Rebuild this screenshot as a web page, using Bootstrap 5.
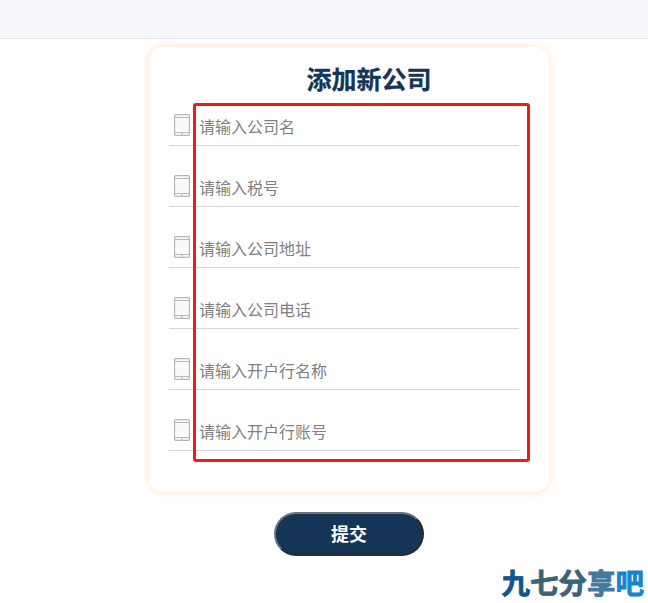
<!DOCTYPE html>
<html lang="zh-CN">
<head>
    <meta charset="UTF-8">
    <meta name="viewport" content="width=device-width, initial-scale=1.0">
    <title>添加新公司</title>
    <link href="https://cdn.jsdelivr.net/npm/bootstrap@5.3.3/dist/css/bootstrap.min.css" rel="stylesheet">
    <style>
        body {
            font-family: "Liberation Sans", "Noto Sans CJK SC", sans-serif;
            height: 603px;
            overflow: hidden;
        }
        .top-strip {
            height: 39px;
            background-color: #f5f7fb;
            border-bottom: 1px solid #e3e6ec;
        }
        .form-box {
            width: 400px;
            height: 445px;
            margin: 8px 0 0 149px;
            padding: 16px 30px 0 20px;
            border-radius: 14px;
            box-shadow: 0 0 6px 2px #ffecd6;
        }
        .form-title {
            font-size: 25px;
            font-weight: 700;
            line-height: 34px;
            color: #153557;
            margin-left: 50px;
            text-align: center;
            -webkit-text-stroke: .3px #153557;
        }
        .field-row {
            height: 61px;
            padding: 0 0 5px 5px;
            border-bottom: 1px solid #d5d5d5;
        }
        .field-row:first-of-type {
            height: 49px;
        }
        .field-row svg {
            flex: none;
            margin-bottom: 4px;
        }
        .field-input {
            border: 0;
            outline: 0;
            padding: 0;
            margin-left: 9px;
            width: 300px;
            font-size: 16px;
            line-height: 24px;
            color: #333;
            background: transparent;
        }
        .field-input::placeholder {
            color: #808080;
            opacity: 1;
        }
        .red-mark {
            position: absolute;
            left: 193px;
            top: 103px;
            width: 337px;
            height: 359px;
            border: 3px solid #f01c14;
            border-radius: 3px;
            pointer-events: none;
        }
        .submit-btn {
            display: block;
            width: 150px;
            height: 44px;
            margin: 20px 0 0 274px;
            border-radius: 22px;
            border: 2px solid;
            border-color: #6f7278 #2b2b2b #2b2b2b #6f7278;
            background-color: #153557;
            color: #fff;
            font-size: 18px;
            font-weight: 700;
            padding: 2px 0 0;
        }
        .site-mark {
            position: absolute;
            right: 4px;
            bottom: 3px;
            font-size: 28.5px;
            font-weight: 700;
            line-height: 32px;
            white-space: nowrap;
            -webkit-text-stroke: .8px;
        }
        .site-a { color: #12568c; }
        .site-b { color: #3a6478; }
        .site-c { color: #44789c; }
        .site-d { color: #1585cc; }
    </style>
</head>
<body>
    <div class="top-strip"></div>

    <div class="form-box bg-white">
        <div class="form-title">添加新公司</div>
        <form onsubmit="return false">
            <div class="field-row d-flex align-items-end">
                <svg width="16" height="22" viewBox="0 0 16 22" fill="#fafafa" stroke="#b8b8b8" stroke-width="1.2"><rect x=".6" y=".6" width="14.8" height="20.8" rx="1"/><path d="M1 3.5h14M1 18.5h14M8 18.5v3"/></svg>
                <input class="field-input" type="text" placeholder="请输入公司名">
            </div>
            <div class="field-row d-flex align-items-end">
                <svg width="16" height="22" viewBox="0 0 16 22" fill="#fafafa" stroke="#b8b8b8" stroke-width="1.2"><rect x=".6" y=".6" width="14.8" height="20.8" rx="1"/><path d="M1 3.5h14M1 18.5h14M8 18.5v3"/></svg>
                <input class="field-input" type="text" placeholder="请输入税号">
            </div>
            <div class="field-row d-flex align-items-end">
                <svg width="16" height="22" viewBox="0 0 16 22" fill="#fafafa" stroke="#b8b8b8" stroke-width="1.2"><rect x=".6" y=".6" width="14.8" height="20.8" rx="1"/><path d="M1 3.5h14M1 18.5h14M8 18.5v3"/></svg>
                <input class="field-input" type="text" placeholder="请输入公司地址">
            </div>
            <div class="field-row d-flex align-items-end">
                <svg width="16" height="22" viewBox="0 0 16 22" fill="#fafafa" stroke="#b8b8b8" stroke-width="1.2"><rect x=".6" y=".6" width="14.8" height="20.8" rx="1"/><path d="M1 3.5h14M1 18.5h14M8 18.5v3"/></svg>
                <input class="field-input" type="text" placeholder="请输入公司电话">
            </div>
            <div class="field-row d-flex align-items-end">
                <svg width="16" height="22" viewBox="0 0 16 22" fill="#fafafa" stroke="#b8b8b8" stroke-width="1.2"><rect x=".6" y=".6" width="14.8" height="20.8" rx="1"/><path d="M1 3.5h14M1 18.5h14M8 18.5v3"/></svg>
                <input class="field-input" type="text" placeholder="请输入开户行名称">
            </div>
            <div class="field-row d-flex align-items-end">
                <svg width="16" height="22" viewBox="0 0 16 22" fill="#fafafa" stroke="#b8b8b8" stroke-width="1.2"><rect x=".6" y=".6" width="14.8" height="20.8" rx="1"/><path d="M1 3.5h14M1 18.5h14M8 18.5v3"/></svg>
                <input class="field-input" type="text" placeholder="请输入开户行账号">
            </div>
        </form>
    </div>

    <button class="submit-btn" type="button">提交</button>

    <div class="red-mark"></div>
    <div class="site-mark"><span class="site-a">九</span><span class="site-b">七分</span><span class="site-c">享</span><span class="site-d">吧</span></div>

    <script src="https://cdn.jsdelivr.net/npm/bootstrap@5.3.3/dist/js/bootstrap.bundle.min.js"></script>
</body>
</html>
